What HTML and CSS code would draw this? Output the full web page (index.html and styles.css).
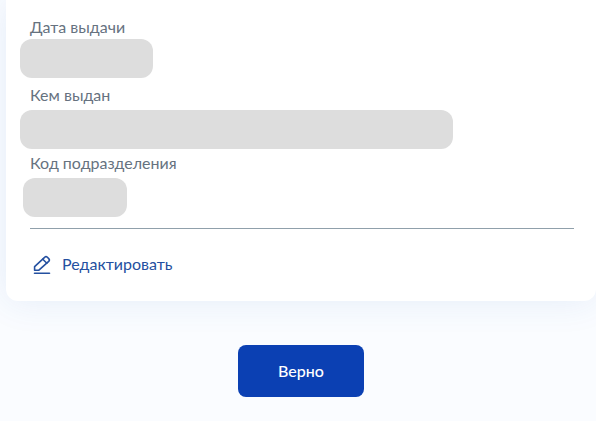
FILE: index.html
```
<!DOCTYPE html>
<html lang="ru">
<head>
    <meta charset="UTF-8">
    <meta name="viewport" content="width=device-width, initial-scale=1.0">
    <title>Паспортные данные</title>
    <link rel="stylesheet" href="styles.css">
</head>
<body>
    <main class="page">
        <section class="card">
            <dl class="fields">
                <div class="field">
                    <dt class="label">Дата выдачи</dt>
                    <dd class="value date"></dd>
                </div>
                <div class="field">
                    <dt class="label">Кем выдан</dt>
                    <dd class="value issuer"></dd>
                </div>
                <div class="field">
                    <dt class="label">Код подразделения</dt>
                    <dd class="value code"></dd>
                </div>
            </dl>
            <a href="#" class="edit-link">
                <svg class="edit-icon" width="24" height="24" viewBox="0 0 24 24" fill="none" stroke="currentColor" stroke-width="1.6" stroke-linecap="round" stroke-linejoin="round">
                    <path d="M4.6 18.2V14.6L14.6 5.3a2 2 0 0 1 2.8 0l1.3 1.3a2 2 0 0 1 0 2.8L8.9 18.2Z"/>
                    <path d="m12.8 7.2 4 4"/>
                    <path d="M4.5 21.3h15"/>
                </svg>
                Редактировать
            </a>
        </section>
        <button type="button" class="confirm-btn">Верно</button>
    </main>
</body>
</html>
```

FILE: styles.css
```
body {
    margin: 0;
    font-family: Lato, "Open Sans", sans-serif;
    font-size: 16px;
    color: #66727f;
    background-color: #fafcff;
}

.page {
    display: flex;
    flex-direction: column;
    align-items: center;
    padding: 0 0 24px 6px;
}

/* Card */
.card {
    box-sizing: border-box;
    width: 100%;
    padding: 17px 22px 25px 24px;
    background-color: #fff;
    border-radius: 0 0 12px 12px;
    box-shadow: 0 0 36px rgba(40, 100, 190, 0.1);
}

.fields {
    display: grid;
    grid-auto-rows: 68px;
    margin: 0;
    padding-bottom: 7px;
    border-bottom: 1px solid #90a0ab;
}

.label {
    line-height: 20px;
}

/* Hidden personal data */
.value {
    height: 39px;
    margin: 2px 0 0 -10px;
    background-color: #ddd;
    border-radius: 12px;
}

.field + .field .value {
    margin-top: 5px;
}

.date {
    width: 133px;
}

.issuer {
    width: 433px;
    max-width: 100%;
}

.code {
    width: 104px;
    margin-left: -7px;
}

/* Edit link */
.edit-link {
    display: flex;
    align-items: center;
    gap: 8px;
    width: fit-content;
    margin-top: 23px;
    line-height: 24px;
    color: #2450a0;
    text-decoration: none;
}

/* Button */
.confirm-btn {
    height: 52px;
    margin-top: 44px;
    padding: 0 40px 2px;
    border: 0;
    border-radius: 8px;
    background-color: #0b40b3;
    color: #fff;
    font-family: inherit;
    font-size: 16px;
    font-weight: 500;
    cursor: pointer;
}
```
